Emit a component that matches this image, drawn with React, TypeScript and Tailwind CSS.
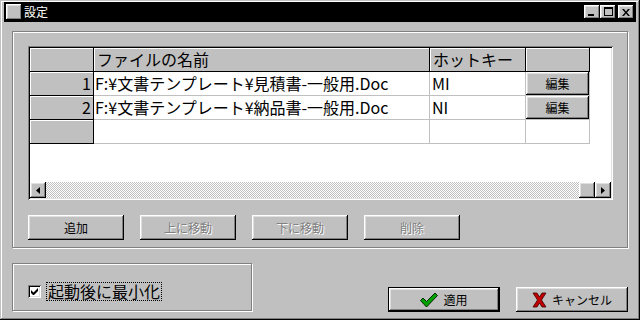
const raised =
  'bg-[#c0c0c0] shadow-[inset_-1px_-1px_#000,inset_1px_1px_#fff,inset_-2px_-2px_#808080,inset_2px_2px_#dfdfdf]'

const rows = [
  { n: '1', file: 'F:¥文書テンプレート¥見積書-一般用.Doc', key: 'MI', edit: true },
  { n: '2', file: 'F:¥文書テンプレート¥納品書-一般用.Doc', key: 'NI', edit: true },
  { n: '', file: '', key: '', edit: false },
]

function TitleBar() {
  return (
    <div className="h-[20px] bg-black flex items-center pl-[2px] pr-[2px]">
      <div className={`w-[16px] h-[16px] ${raised}`} />
      <span className="ml-[2px] text-white text-[12px] leading-none">設定</span>
      <div className="ml-auto flex items-center">
        <button className={`w-[16px] h-[14px] ${raised} flex items-end pb-[3px] pl-[4px]`}>
          <span className="block w-[6px] h-[2px] bg-black" />
        </button>
        <button className={`w-[16px] h-[14px] ${raised} flex items-center justify-center`}>
          <span className="block w-[9px] h-[9px] border border-black border-t-2 -mt-[1px]" />
        </button>
        <button className={`ml-[2px] w-[16px] h-[14px] ${raised} flex items-center justify-center`}>
          <svg width="8" height="7" viewBox="0 0 8 7">
            <path d="M0 0h2l2 2.5L6 0h2L5 3.5 8 7H6L4 4.5 2 7H0l3-3.5z" fill="#000" />
          </svg>
        </button>
      </div>
    </div>
  )
}

function Arrow({ dir }: { dir: 'left' | 'right' }) {
  return (
    <div className={`w-[16px] h-[16px] ${raised} flex items-center justify-center`}>
      <svg width="4" height="7" viewBox="0 0 4 7">
        {dir === 'left' ? (
          <path d="M4 0v7L0 3.5z" fill="#000" />
        ) : (
          <path d="M0 0v7l4-3.5z" fill="#000" />
        )}
      </svg>
    </div>
  )
}

function Grid() {
  return (
    <div className="w-[585px] h-[154px] p-[2px] bg-white shadow-[inset_1px_1px_#808080,inset_-1px_-1px_#fff,inset_2px_2px_#000,inset_-2px_-2px_#dfdfdf] flex flex-col">
      {/* header */}
      <div className="flex h-[24px] text-[16px] leading-[23px]">
        <div className="w-[64px] h-full bg-[#c0c0c0] border-r border-b border-black shadow-[inset_1px_1px_#fff]" />
        <div className="w-[336px] h-full bg-[#c0c0c0] border-r border-b border-black shadow-[inset_1px_1px_#fff] pl-[3px]">
          ファイルの名前
        </div>
        <div className="w-[96px] h-full bg-[#c0c0c0] border-r border-b border-black shadow-[inset_1px_1px_#fff] pl-[3px]">
          ホットキー
        </div>
        <div className="w-[64px] h-full bg-[#c0c0c0] border-r border-b border-black shadow-[inset_1px_1px_#fff]" />
      </div>
      {rows.map((r, i) => (
        <div key={i} className="flex h-[24px] text-[16px] leading-[23px]">
          <div className="w-[64px] h-full bg-[#c0c0c0] border-r border-b border-black shadow-[inset_1px_1px_#fff] text-right pr-[2px]">
            {r.n}
          </div>
          <div className="w-[336px] h-full border-r border-b border-[#c0c0c0] pl-[1px] whitespace-nowrap overflow-hidden">
            {r.file}
          </div>
          <div className="w-[96px] h-full border-r border-b border-[#c0c0c0] pl-[2px]">{r.key}</div>
          <div className="w-[64px] h-full border-r border-b border-[#c0c0c0]">
            {r.edit && (
              <div className={`w-full h-full ${raised} flex items-center justify-center text-[12px] leading-none`}>
                編集
              </div>
            )}
          </div>
        </div>
      ))}
      <div className="flex-1" />
      <div className="flex h-[16px]">
        <Arrow dir="left" />
        <div className="flex-1 bg-[repeating-conic-gradient(#fff_0_25%,#c0c0c0_0_50%)] bg-[length:2px_2px]" />
        <div className={`w-[16px] h-[16px] ${raised}`} />
        <Arrow dir="right" />
      </div>
    </div>
  )
}

function Btn({ label, disabled }: { label: string; disabled?: boolean }) {
  return (
    <button
      className={`w-[96px] h-[25px] ${raised} text-[12px] leading-none flex items-center justify-center ${
        disabled ? 'text-[#808080] [text-shadow:1px_1px_0_#fff]' : 'text-black'
      }`}
    >
      {label}
    </button>
  )
}

export default function App() {
  return (
    <div className="w-[640px] h-[320px] overflow-hidden bg-[#c0c0c0] font-['Noto_Sans_CJK_JP',sans-serif] text-black shadow-[inset_-1px_-1px_#000,inset_1px_1px_#c0c0c0,inset_-2px_-2px_#808080,inset_2px_2px_#fff] pt-[2px] px-[4px]">
      <TitleBar />

      {/* file list group */}
      <div className="ml-[8px] mt-[9px] w-[616px] h-[217px] border border-[#808080] shadow-[inset_1px_1px_#fff,1px_1px_#fff] pl-[15px] pt-[14px]">
        <Grid />
        <div className="mt-[15px] flex gap-[16px]">
          <Btn label="追加" />
          <Btn label="上に移動" disabled />
          <Btn label="下に移動" disabled />
          <Btn label="削除" disabled />
        </div>
      </div>

      {/* bottom */}
      <div className="ml-[8px] mt-[15px] flex items-start">
        <div className="w-[240px] h-[48px] border border-[#808080] shadow-[inset_1px_1px_#fff,1px_1px_#fff] pl-[15px] pt-[18px]">
          <div className="flex items-center h-[19px]">
            <div className="w-[13px] h-[13px] bg-white shadow-[inset_1px_1px_#808080,inset_-1px_-1px_#fff,inset_2px_2px_#000,inset_-2px_-2px_#dfdfdf] flex items-center justify-center">
              <svg width="7" height="7" viewBox="0 0 7 7">
                <path d="M0 2v3l2 2h1l4-4V0L2.5 4.5z" fill="#000" />
              </svg>
            </div>
            <div className="ml-[5px] h-[19px] border border-dotted border-black px-[1px] text-[16px] leading-[17px] whitespace-nowrap">
              起動後に最小化
            </div>
          </div>
        </div>

        <div className="ml-[136px] mt-[24px] flex gap-[16px]">
          <button className="w-[112px] h-[25px] border border-black bg-[#c0c0c0]">
            <div className={`w-full h-full ${raised} flex items-center justify-center gap-[5px] text-[12px] leading-none`}>
              <svg width="18" height="16" viewBox="0 0 18 16">
                <path d="M0.5 8.5 L3 6 L6.5 9.5 L15 1 L17.5 3.5 L6.5 15 Z" fill="#00a000" stroke="#002800" strokeWidth="1" />
              </svg>
              <span>適用</span>
            </div>
          </button>
          <button className={`w-[112px] h-[25px] ${raised} flex items-center justify-center gap-[5px] text-[12px] leading-none`}>
            <svg width="15" height="16" viewBox="0 0 15 16">
              <path d="M1 1h4l2.5 4L10 1h4l-4.5 7 4.5 7h-4l-2.5-4L5 15H1l4.5-7z" fill="#c00000" stroke="#400000" strokeWidth="0.8" />
            </svg>
            <span>キャンセル</span>
          </button>
        </div>
      </div>
    </div>
  )
}
